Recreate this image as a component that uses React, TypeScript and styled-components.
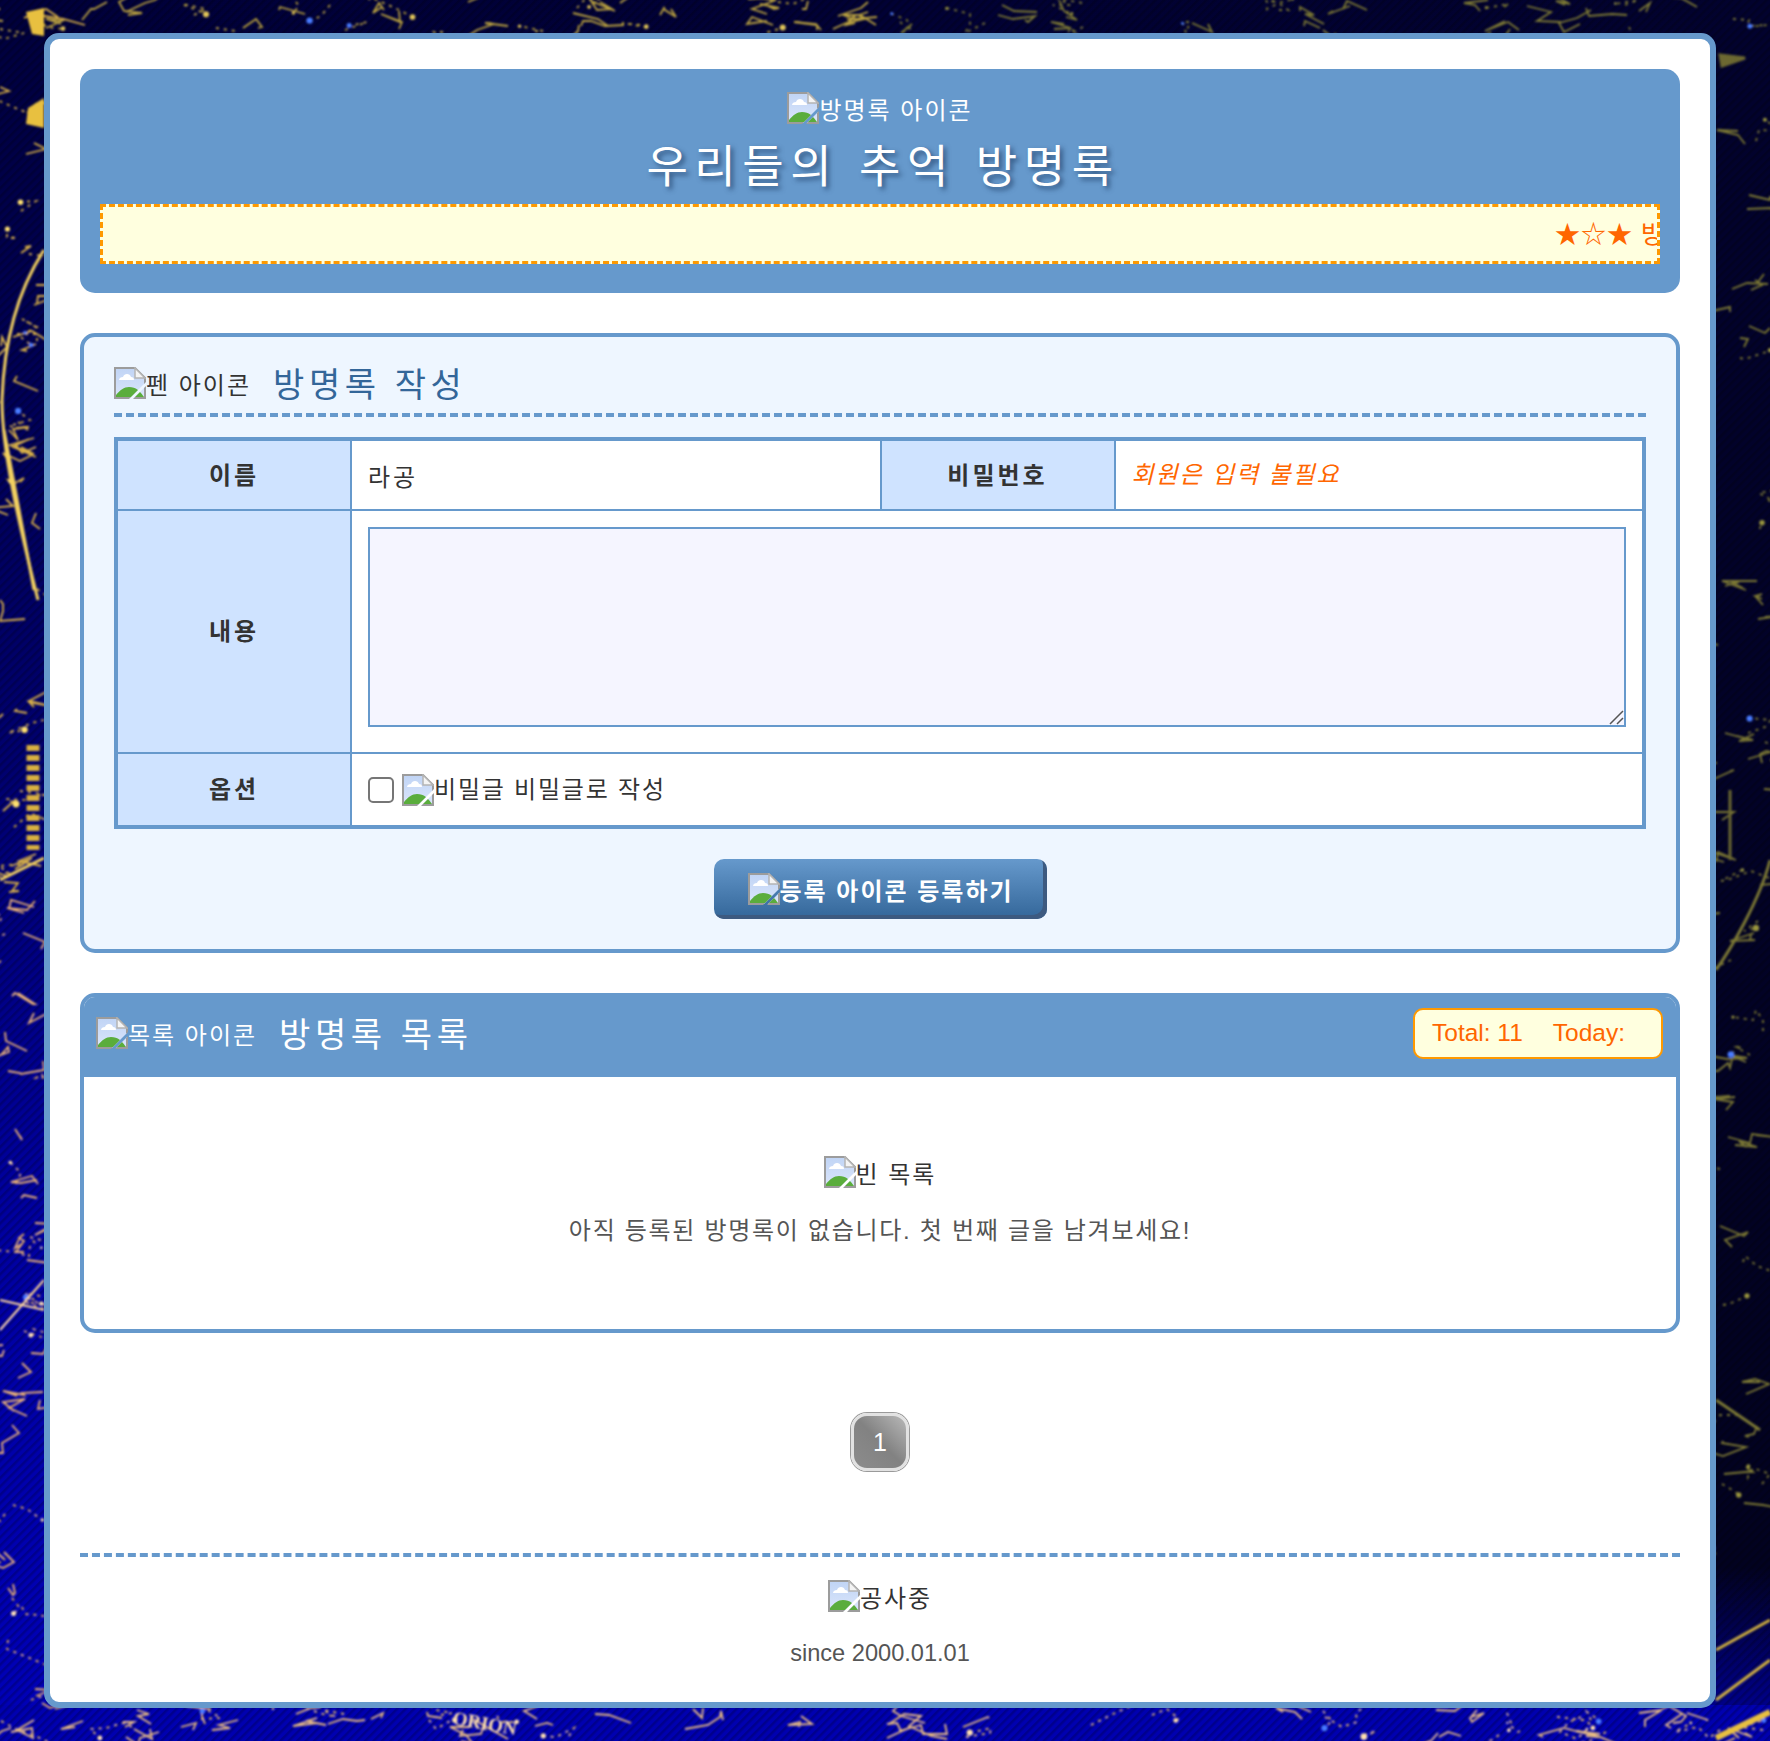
import React, { useId } from 'react';
import styled, { createGlobalStyle } from 'styled-components';

const BLUE = '#6699cc';
const DEEP = '#336699';
const ORANGE = '#ff6600';

const GlobalStyle = createGlobalStyle`
  html {
    background: #000050;
  }
  body {
    margin: 0;
    padding: 0;
    font-family: "Liberation Sans", "Noto Sans CJK KR", sans-serif;
    color: #333;
  }
`;

const Sky = styled.svg`
  position: fixed;
  inset: 0;
  width: 100%;
  height: 100%;
  z-index: -1;
`;

const Page = styled.div`
  width: 1672px;
  box-sizing: border-box;
  margin: 33px 0 33px 44px;
  padding: 30px;
  background: #fff;
  border: 6px solid ${BLUE};
  border-radius: 15px;
`;

const Header = styled.header`
  height: 224px;
  box-sizing: border-box;
  padding: 23px 20px 0;
  background: ${BLUE};
  border-radius: 15px;
  text-align: center;
  color: #fff;
`;

const Alt = styled.span`
  display: inline-flex;
  align-items: center;
  height: 32px;
  box-sizing: border-box;
  padding-top: 6px;
  font-size: 24px;
  letter-spacing: 2px;
  line-height: 26px;
`;

const Logo = styled.div`
  display: flex;
  justify-content: center;
  height: 32px;
`;

const MainTitle = styled.h1`
  margin: 16px 0 0;
  height: 55px;
  padding-left: 6px;
  font-size: 45px;
  line-height: 55px;
  font-weight: 400;
  letter-spacing: 6.5px;
  word-spacing: 2px;
  text-shadow: 3px 3px 5px rgba(30, 60, 100, 0.75);
`;

const Marquee = styled.div`
  display: flex;
  align-items: center;
  height: 60px;
  box-sizing: border-box;
  margin-top: 9px;
  padding-bottom: 4px;
  background: #ffffdf;
  border: 3px dashed #ff9900;
  overflow: hidden;
  color: ${ORANGE};
  font-size: 25px;
  white-space: nowrap;
`;

const MarqueeText = styled.div`
  padding-left: 1452px;
  letter-spacing: 1px;
`;

const FormBox = styled.section`
  margin-top: 40px;
  height: 620px;
  box-sizing: border-box;
  padding: 30px;
  background: #eef6ff;
  border: 4px solid ${BLUE};
  border-radius: 15px;
`;

const FormHead = styled.div`
  display: flex;
  align-items: flex-start;
  height: 50px;
  box-sizing: border-box;
  border-bottom: 4px dashed ${BLUE};
`;

const SectionTitle = styled.h2<{ $light?: boolean }>`
  margin: 0 0 0 22px;
  padding-top: ${(p) => (p.$light ? 4 : 0)}px;
  font-size: 34px;
  line-height: 36px;
  font-weight: 400;
  letter-spacing: 4.6px;
  color: ${(p) => (p.$light ? '#fff' : DEEP)};
`;

const FormTable = styled.table`
  width: 100%;
  margin-top: 20px;
  border-collapse: collapse;
  table-layout: fixed;
  border: 4px solid ${BLUE};
`;

const Row = styled.tr<{ $height: number }>`
  height: ${(p) => p.$height}px;
`;

const Label = styled.th`
  width: 232px;
  padding: 0 0 4px;
  background: #cfe3ff;
  border: 2px solid ${BLUE};
  font-size: 24px;
  font-weight: 700;
  letter-spacing: 3px;
  color: #333;
  text-align: center;
`;

const Cell = styled.td`
  background: #fff;
  border: 2px solid ${BLUE};
  padding: 0 16px;
  font-size: 24px;
`;

const TextInput = styled.input`
  display: block;
  width: 100%;
  box-sizing: border-box;
  border: 0;
  outline: 0;
  padding: 0;
  background: transparent;
  font: inherit;
  letter-spacing: 3px;
  color: #333;
  &::placeholder {
    color: ${ORANGE};
    font-style: italic;
    letter-spacing: 1.9px;
    opacity: 1;
  }
`;

const Message = styled.textarea`
  display: block;
  width: 100%;
  height: 200px;
  box-sizing: border-box;
  margin-bottom: 10px;
  background: #f5f5ff;
  border: 2px solid ${BLUE};
  outline: 0;
  &::-webkit-resizer {
    background: url("data:image/svg+xml,%3Csvg xmlns='http://www.w3.org/2000/svg' width='15' height='15'%3E%3Cpath d='M1 14L14 1M8 14L14 8' stroke='%23555' stroke-width='1.5'/%3E%3C/svg%3E") no-repeat;
  }
`;

const Option = styled.label`
  display: flex;
  align-items: center;
  font-size: 24px;
  letter-spacing: 1.8px;
  color: #333;
`;

const Check = styled.input`
  appearance: none;
  width: 26px;
  height: 26px;
  box-sizing: border-box;
  margin: 0 8px 0 0;
  background: #fff;
  border: 2px solid #767676;
  border-radius: 5px;
`;

const OptionText = styled.span`
  padding-bottom: 4px;
`;

const Actions = styled.div`
  display: flex;
  justify-content: center;
  margin-top: 30px;
`;

const Submit = styled.button`
  display: flex;
  align-items: center;
  width: 333px;
  height: 60px;
  padding: 0 0 0 34px;
  border: 0;
  border-radius: 10px;
  background: linear-gradient(to bottom, ${BLUE}, ${DEEP});
  box-shadow: inset -4px -4px 0 #3d5a80;
  color: #fff;
  font: inherit;
  font-size: 24px;
  font-weight: 700;
  letter-spacing: 2px;
`;

const ListBox = styled.section`
  margin-top: 40px;
  height: 340px;
  box-sizing: border-box;
  border: 4px solid ${BLUE};
  border-radius: 15px;
  overflow: hidden;
`;

const ListHead = styled.div`
  display: flex;
  align-items: center;
  height: 80px;
  box-sizing: border-box;
  padding: 0 13px 8px 12px;
  background: ${BLUE};
  color: #fff;
`;

const Stats = styled.div`
  display: flex;
  align-items: center;
  gap: 30px;
  width: 250px;
  height: 51px;
  box-sizing: border-box;
  margin-left: auto;
  padding-left: 17px;
  background: #ffffdf;
  border: 2px solid #ff9900;
  border-radius: 10px;
  color: ${ORANGE};
  font-size: 24.5px;
`;

const Empty = styled.div`
  display: flex;
  flex-direction: column;
  align-items: center;
  padding-top: 79px;
  color: #333;
`;

const EmptyText = styled.p`
  margin: 23px 0 0;
  font-size: 24px;
  letter-spacing: 1.7px;
  color: #555;
`;

const Pager = styled.nav`
  display: flex;
  justify-content: center;
  margin-top: 80px;
`;

const PageNumber = styled.a`
  display: flex;
  align-items: center;
  justify-content: center;
  width: 58px;
  height: 58px;
  box-sizing: border-box;
  border: 3px solid #e2e2e2;
  border-radius: 16px;
  background: linear-gradient(to bottom left, #b8b8b8 0%, #828282 50%, #8c8c8c 100%);
  box-shadow: 0 0 0 1px #9a9a9a;
  color: #fff;
  font-size: 25px;
`;

const Footer = styled.footer`
  margin-top: 82px;
  padding: 23px 0 5px;
  border-top: 4px dashed ${BLUE};
  display: flex;
  flex-direction: column;
  align-items: center;
`;

const Since = styled.p`
  margin: 27px 0 0;
  font-size: 23.6px;
  line-height: 28px;
  color: #555;
`;

const BrokenImage: React.FC = () => {
  const id = useId();
  return (
    <svg width="32" height="32" viewBox="0 0 32 32" style={{ flex: 'none' }} aria-hidden="true">
      <defs>
        <linearGradient id={`${id}s`} x1="0" y1="0" x2="0" y2="1">
          <stop offset="0" stopColor="#c0d4f5" />
          <stop offset="1" stopColor="#dbe6fb" />
        </linearGradient>
        <clipPath id={`${id}a`}>
          <polygon points="0,0 32,0 32,15 15,32 0,32" />
        </clipPath>
        <clipPath id={`${id}b`}>
          <polygon points="32,19 32,32 19,32" />
        </clipPath>
      </defs>
      {['a', 'b'].map((k) => (
        <g key={k} clipPath={`url(#${id}${k})`}>
          <path d="M1 1H21L31 11V31H1Z" fill={`url(#${id}s)`} stroke="#9c9c9c" strokeWidth="2" />
          <path d="M21 1V11H31Z" fill="#f4f4f4" stroke="#b4b4b4" strokeWidth="1.5" />
          <path d="M5 13c0-2 2-3 4-3 1-4 7-4 8 0 2 0 3 1 3 3Z" fill="#fff" />
          <path d="M2 30V28C6 23 10 20 15 20C22 20 26 24 30 30Z" fill="#5aad3c" />
        </g>
      ))}
    </svg>
  );
};

// star chart behind the page, drawn from a seeded generator
const rng = (seed: number) => () => {
  seed = (seed * 16807) % 2147483647;
  return seed / 2147483647;
};

const chart = (seed: number, x0: number, y0: number, w: number, h: number, n: number) => {
  const r = rng(seed);
  const lines: string[] = [];
  const stars: [number, number, number][] = [];
  for (let i = 0; i < n; i++) {
    let x = x0 + r() * w;
    let y = y0 + r() * h;
    let d = `M${x.toFixed(0)} ${y.toFixed(0)}`;
    const steps = 2 + Math.floor(r() * 3);
    for (let s = 0; s < steps; s++) {
      x += (r() - 0.5) * 50;
      y += (r() - 0.5) * 22;
      d += `L${x.toFixed(0)} ${y.toFixed(0)}`;
    }
    lines.push(d);
    if (i % 3 === 0) stars.push([x, y, 1 + r() * 2.5]);
  }
  return { lines, stars };
};

const regions = [
  { ...chart(11, 0, 0, 44, 900, 45), color: '#d8b048', star: '#ffe070' },
  { ...chart(23, 0, 900, 44, 841, 45), color: '#e8b078', star: '#ffe2b8' },
  { ...chart(37, 0, 0, 900, 33, 40), color: '#b8a040', star: '#e0c458' },
  { ...chart(43, 900, 0, 816, 33, 30), color: '#7c7834', star: '#98943e' },
  { ...chart(41, 0, 1708, 1770, 33, 70), color: '#e8bc84', star: '#ffe0b0' },
  { ...chart(53, 1716, 0, 54, 1600, 55), color: '#7c7834', star: '#98943e' },
];

const Backdrop: React.FC = () => (
  <Sky viewBox="0 0 1770 1741" preserveAspectRatio="none" aria-hidden="true">
    <defs>
      <linearGradient id="left" x1="0" y1="0" x2="0" y2="1">
        <stop offset="0" stopColor="#00003c" />
        <stop offset="0.45" stopColor="#000070" />
        <stop offset="0.7" stopColor="#0000a0" />
        <stop offset="1" stopColor="#0000b8" />
      </linearGradient>
      <linearGradient id="right" x1="0" y1="0" x2="0" y2="1">
        <stop offset="0" stopColor="#02022e" />
        <stop offset="0.9" stopColor="#020220" />
        <stop offset="0.96" stopColor="#000070" />
        <stop offset="1" stopColor="#0000a0" />
      </linearGradient>
      <linearGradient id="top" x1="0" y1="0" x2="1" y2="0">
        <stop offset="0" stopColor="#00003c" />
        <stop offset="1" stopColor="#02022e" />
      </linearGradient>
      <pattern id="hatch" width="6" height="6" patternUnits="userSpaceOnUse" patternTransform="rotate(45)">
        <rect width="2.5" height="6" fill="#000" fillOpacity="0.2" />
      </pattern>
      <filter id="soft">
        <feGaussianBlur stdDeviation="0.9" />
      </filter>
    </defs>
    <rect width="885" height="1741" fill="url(#left)" />
    <rect x="885" width="885" height="1741" fill="url(#right)" />
    <rect width="1770" height="36" fill="url(#top)" />
    <rect y="1705" width="1770" height="36" fill="#0000b0" />
    <rect width="1770" height="1741" fill="url(#hatch)" />
    <g filter="url(#soft)">
      {regions.map((reg, i) => (
        <g key={i} fill="none" stroke={reg.color} strokeWidth="1.8">
          {reg.lines.map((d, j) => (
            <path key={j} d={d} strokeDasharray={j % 3 === 0 ? '3 5' : undefined} />
          ))}
          {reg.stars.map(([x, y, s], j) => (
            <circle key={j} cx={x} cy={y} r={s} fill={j % 4 === 0 ? '#4a7cff' : reg.star} stroke="none" />
          ))}
        </g>
      ))}
      <g fill="none" stroke="#f2d060" strokeWidth="3">
        <path d="M44 250C18 290 4 340 2 400C2 450 18 520 38 600" />
        <path d="M4 430L34 590" />
        <path d="M0 880L44 858" />
      </g>
      <path d="M26 12L44 8V36L32 34ZM28 108L44 98V128L26 124Z" fill="#e8c040" />
      <path d="M33 745V850" stroke="#d8b040" strokeWidth="13" strokeDasharray="6 4" fill="none" />
      <path d="M0 1300L44 1310M44 1280L0 1330" stroke="#ffd8a0" strokeWidth="2" fill="none" />
      <g fill="none" stroke="#7c7834" strokeWidth="3">
        <path d="M1770 860C1760 900 1730 950 1716 970" />
        <path d="M1716 1400L1760 1430" />
      </g>
      <path d="M1716 1650L1770 1620M1716 1700L1770 1660" stroke="#d0b040" strokeWidth="3" fill="none" />
      <path d="M1716 1738L1770 1712" stroke="#e8c040" strokeWidth="6" fill="none" />
      <path d="M1720 55L1745 58L1722 66ZM1730 790V860" stroke="#6c6830" strokeWidth="3" fill="#6c6830" />
      <text x="452" y="1724" fill="#ffe0b0" fontSize="19" fontWeight="700" fontFamily="Liberation Serif, serif" transform="rotate(10 452 1724)">
        ORION
      </text>
    </g>
  </Sky>
);

const App: React.FC = () => (
  <>
    <GlobalStyle />
    <Backdrop />
    <Page>
      <Header>
        <Logo>
          <BrokenImage />
          <Alt>방명록 아이콘</Alt>
        </Logo>
        <MainTitle>우리들의 추억 방명록</MainTitle>
        <Marquee>
          <MarqueeText>★☆★ 방명록에 오신 것을 환영합니다 ★☆★</MarqueeText>
        </Marquee>
      </Header>

      <FormBox>
        <FormHead>
          <BrokenImage />
          <Alt>펜 아이콘</Alt>
          <SectionTitle>방명록 작성</SectionTitle>
        </FormHead>
        <FormTable>
          <tbody>
            <Row $height={71}>
              <Label>이름</Label>
              <Cell>
                <TextInput defaultValue="라공" />
              </Cell>
              <Label>비밀번호</Label>
              <Cell>
                <TextInput type="text" placeholder="회원은 입력 불필요" />
              </Cell>
            </Row>
            <Row $height={243}>
              <Label>내용</Label>
              <Cell colSpan={3}>
                <Message />
              </Cell>
            </Row>
            <Row $height={74}>
              <Label>옵션</Label>
              <Cell colSpan={3}>
                <Option>
                  <Check type="checkbox" />
                  <BrokenImage />
                  <OptionText>비밀글 비밀글로 작성</OptionText>
                </Option>
              </Cell>
            </Row>
          </tbody>
        </FormTable>
        <Actions>
          <Submit type="button">
            <BrokenImage />
            등록 아이콘 등록하기
          </Submit>
        </Actions>
      </FormBox>

      <ListBox>
        <ListHead>
          <BrokenImage />
          <Alt>목록 아이콘</Alt>
          <SectionTitle $light>방명록 목록</SectionTitle>
          <Stats>
            <span>Total: 11</span>
            <span>Today:</span>
          </Stats>
        </ListHead>
        <Empty>
          <Logo>
            <BrokenImage />
            <Alt>빈 목록</Alt>
          </Logo>
          <EmptyText>아직 등록된 방명록이 없습니다. 첫 번째 글을 남겨보세요!</EmptyText>
        </Empty>
      </ListBox>

      <Pager>
        <PageNumber>1</PageNumber>
      </Pager>

      <Footer>
        <Logo>
          <BrokenImage />
          <Alt>공사중</Alt>
        </Logo>
        <Since>since 2000.01.01</Since>
      </Footer>
    </Page>
  </>
);

export default App;
